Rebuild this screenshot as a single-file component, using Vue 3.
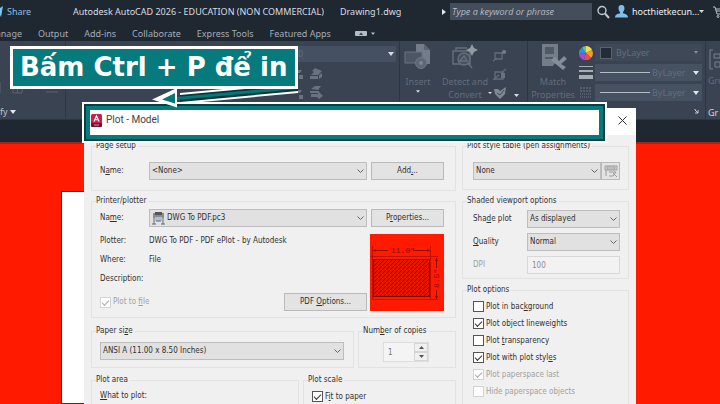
<script setup>
import { reactive } from 'vue'

const tabs = ['Output', 'Add-ins', 'Collaborate', 'Express Tools', 'Featured Apps']

const options = reactive([
  { id: 'bg', pre: 'Plot in bac', key: 'k', post: 'ground', on: false, disabled: false },
  { id: 'lw', pre: 'Plot object lineweights', key: '', post: '', on: true, disabled: false },
  { id: 'tr', pre: 'Plot ', key: 't', post: 'ransparency', on: false, disabled: false },
  { id: 'st', pre: 'Plot with plot styl', key: 'e', post: 's', on: true, disabled: false },
  { id: 'ps', pre: 'Plot paperspace last', key: '', post: '', on: true, disabled: true },
  { id: 'hd', pre: 'Hide paperspace objects', key: '', post: '', on: false, disabled: true }
])
</script>

<template>
  <div class="app">
    <header class="titlebar">
      <svg class="plane" viewBox="0 0 4 12"><path d="M0 2L3 0L1 11L0 9Z" fill="#7cc4f2" /></svg>
      <a class="share" href="#">Share</a>
      <span class="product">Autodesk AutoCAD 2026 - EDUCATION (NON COMMERCIAL)</span>
      <span class="file">Drawing1.dwg</span>
      <svg class="play" viewBox="0 0 4 6"><path d="M0 0L4 3L0 6Z" fill="#e4e8ec" /></svg>
      <input class="search" type="text" placeholder="Type a keyword or phrase" aria-label="Search">
      <svg class="glass" viewBox="0 0 14 14" fill="none" stroke="#c3c8cd">
        <circle cx="6" cy="5.5" r="4" stroke-width="1.4" /><path d="M9 8.5L13 13" stroke-width="2" />
      </svg>
      <svg class="user" viewBox="0 0 13 13" fill="#7fbdec">
        <path d="M6.500 0C9 0 9.700 1.800 9.400 4C9.200 5.500 8.500 6.500 8 7V8.300C10 9 13 9.300 13 12.500H0C0 9.300 3 9 5 8.300V7C4.500 6.500 3.800 5.500 3.600 4C3.300 1.800 4 0 6.500 0Z" />
      </svg>
      <a class="account" href="#">hocthietkecun...</a>
      <svg class="caret" viewBox="0 0 5 3"><path d="M0 0H5L2.500 3Z" fill="#d5d9dd" /></svg>
      <svg class="cart" viewBox="0 0 7 12" fill="none" stroke="#b9c0c7">
        <path d="M0 1H2L4 8H8M2.500 3H8M3 5H8" /><circle cx="5" cy="10.500" r="1" />
      </svg>
    </header>

    <nav class="tabs">
      <a class="first" href="#">Manage</a>
      <a v-for="t in tabs" :key="t" href="#">{{ t }}</a>
      <svg class="tabtool" viewBox="0 0 20 7">
        <rect y="1" width="12" height="5" rx="1" fill="#b6bcc3" /><path d="M4 5L6 2.500L8 5Z" fill="#333b48" />
        <path d="M16 2.500H20L18 5Z" fill="#b6bcc3" />
      </svg>
    </nav>

    <div class="ribbon">
      <section class="panel modify">
        <svg class="modicons" viewBox="0 0 65 16" fill="none" stroke="#596474">
          <path d="M0 2V13M13 3H22V13H13ZM13 8H22M17.500 3V13M46 4H57M44 8H54M46 12H58" />
          <path d="M30.500 6H34.500L32.500 9Z" fill="#d2d7dc" stroke="none" />
        </svg>
        <a class="panelname" href="#">fy
          <svg class="caret" viewBox="0 0 6 4"><path d="M0 0H6L3 4Z" fill="#e5e8eb" /></svg>
        </a>
      </section>

      <section class="panel layers">
        <div class="layerbox"><span>0</span><svg class="caret" viewBox="0 0 6 4"><path d="M0 0H6L3 4Z" fill="#d9dde1" /></svg></div>
        <svg class="layericons" viewBox="0 0 101 36">
          <g fill="#69727f">
            <path d="M2 3H7L5 6H2ZM4 8H8V12H4ZM2 8H3V12H2ZM2 23H7L5 26H2ZM4 28H8V32H4Z" />
            <path d="M16 8L19 5L26 5L23 8ZM17 4L20 1L27 4L24 7ZM15 9H23V12H15ZM24 8L27 6V10L24 12Z" />
            <path d="M16 22L20 19H26L23 23ZM15 24H24V26H15ZM16 27H22V30H16ZM24 25L28 29L24 32L21 29Z" />
          </g>
        </svg>
      </section>

      <section class="panel insert">
        <button class="tool" type="button">
          <svg class="toolicon" viewBox="0 0 28 26">
            <path d="M12 0H20L26 6V20H12Z" fill="#737c88" /><path d="M20 0V6H26Z" fill="#596473" />
            <rect x="1" y="8" width="17" height="11" fill="#4b5666" stroke="#6a7480" />
            <circle cx="17" cy="19" r="5.500" fill="#5d6775" stroke="#6f7884" /><circle cx="17" cy="19" r="2" fill="#7b8490" />
          </svg>
          <span>Insert</span>
          <svg class="caret" viewBox="0 0 6 4"><path d="M0 0H6L3 4Z" fill="#d9dde1" /></svg>
        </button>
        <button class="tool detect" type="button">
          <svg class="toolicon" viewBox="0 0 28 26" fill="none" stroke="#65707c" stroke-width="1.400">
            <path d="M5 6V4H16M2 7H19V20H2Z" /><circle cx="13" cy="15" r="6" fill="#465060" /><path d="M17 19L21 24M9 17L13 12L16 17Z" />
            <path d="M21 0L23 4L27 6L23 8L21 12L19 8L15 6L19 4Z" fill="#929aa4" stroke="none" />
          </svg>
          <span>Detect and<br>Convert</span>
        </button>
        <svg class="smallicons" viewBox="0 0 32 54">
          <g fill="none" stroke="#636d79" stroke-width="1.300">
            <path d="M7 5H14V11H7ZM5 13L9 10M14 5L18 3M7 24H15V31H7ZM5 32L11 27M13 25L18 21" />
          </g>
          <circle cx="16" cy="4" r="2" fill="#757e89" /><rect x="13" y="25" width="4" height="5" fill="#69737f" />
          <path d="M6 41H10L12 43L18 39L17 46L12 51L7 46Z" fill="#7e8792" /><path d="M9 45L12 47L16 42" fill="none" stroke="#424c5b" />
          <path d="M0 44H4L2 46ZM26 46H31L28.500 49Z" fill="#d9dde1" />
        </svg>
      </section>

      <section class="panel props">
        <button class="tool match" type="button">
          <svg class="toolicon" viewBox="0 0 28 26">
            <path d="M3 0H19V15L14 22H3Z" fill="#737c88" /><path d="M6 3H15V10H6ZM6 13H14V15H6Z" fill="#4f5968" />
            <path d="M12 16L16 13L20 17L25 12L28 15L22 20L27 23L24 26L18 21Z" fill="#858d98" />
          </svg>
          <span>Match<br>Properties</span>
        </button>
        <div class="proplist">
          <svg class="propicon" viewBox="0 0 14 14">
            <path d="M7 7V0A7 7 0 0 1 13 4Z" fill="#f4dc4a" /><path d="M7 7L13 4A7 7 0 0 1 12 12Z" fill="#f39a35" />
            <path d="M7 7L12 12A7 7 0 0 1 5 14Z" fill="#e94b57" /><path d="M7 7L5 14A7 7 0 0 1 0 8Z" fill="#a64cc8" />
            <path d="M7 7L0 8A7 7 0 0 1 3 1.500Z" fill="#2f8fe8" /><path d="M7 7L3 1.500A7 7 0 0 1 7 0Z" fill="#5bc98a" />
          </svg>
          <div class="combo flat"><i class="swatch"></i><span>ByLayer</span><svg class="caret" viewBox="0 0 6 4"><path d="M1 0H5L3 3Z" fill="#848d98" /></svg></div>
          <svg class="propicon" viewBox="0 0 14 14" fill="#a7adb5"><path d="M0 0H14V1H0ZM0 4H14V6H0ZM0 9H14V13H0Z" /></svg>
          <div class="combo"><i class="line"></i><span>ByLayer</span><svg class="caret" viewBox="0 0 6 4"><path d="M0 0H6L3 4Z" fill="#e1e4e8" /></svg></div>
          <svg class="propicon" viewBox="0 0 14 14" stroke="#717b87"><path d="M1 2H13M1 5H13" stroke-dasharray="2 1" /><path d="M1 8H13M1 11H13" stroke-dasharray="1 1" /></svg>
          <div class="combo"><i class="line"></i><span>ByLayer</span><svg class="caret" viewBox="0 0 6 4"><path d="M0 0H6L3 4Z" fill="#e1e4e8" /></svg></div>
        </div>
        <svg class="launcher" viewBox="0 0 5 5"><path d="M0 0H2M1 1L4 4M4 1V4H1" fill="none" stroke="#c7ccd2" /></svg>
      </section>

      <section class="panel groups">
        <svg class="groupicon" viewBox="0 0 12 22" fill="none" stroke="#78828e"><path d="M5 1H2V20H5M6 5H12V9H6ZM7 13H12V18H7Z" /></svg>
        <span class="dim">Gro</span>
        <span class="groupname">Gr</span>
      </section>
    </div>

    <main class="canvas"><div class="paper"></div></main>

    <form class="dialog" @submit.prevent>
      <div class="caption">
        <svg class="logo" viewBox="0 0 11 13">
          <rect width="11" height="13" rx="1.500" fill="#c91f4b" /><path d="M0 9H11V11.500A1.500 1.500 0 0 1 9.500 13H1.500A1.500 1.500 0 0 1 0 11.500Z" fill="#70142f" />
          <path d="M3 7.500L5.500 2L8 7.500M4 5.700H7" fill="none" stroke="#fff" stroke-width="1.300" /><path d="M3 11H8" stroke="#d896a8" />
        </svg>
        <h1>Plot - Model</h1>
        <button class="close" type="button" aria-label="Close">
          <svg viewBox="0 0 9 9"><path d="M0.500 0.500L8.500 8.500M8.500 0.500L0.500 8.500" stroke="#333" fill="none" /></svg>
        </button>
      </div>

      <div class="columns">
        <div class="left">
          <fieldset class="setup">
            <legend>Page setup</legend>
            <div class="grid3">
              <label for="page">N<u>a</u>me:</label>
              <span class="pick"><select id="page"><option>&lt;None&gt;</option></select><svg viewBox="0 0 7 4"><path d="M0.500 0.500L3.500 3.500L6.500 0.500" /></svg></span>
              <button type="button">Add<u>.</u>..</button>
            </div>
          </fieldset>

          <fieldset class="printer">
            <legend>Printer/plotter</legend>
            <div class="grid3">
              <label for="plotter">Na<u>m</u>e:</label>
              <span class="pick">
                <select id="plotter" class="withicon"><option>DWG To PDF.pc3</option></select>
                <svg class="device" viewBox="0 0 13 13"><path d="M1 1H12V6H1Z" fill="#8a8a8a" /><path d="M3 0H10V3H3Z" fill="#555" /><path d="M3 5H10V9H3Z" fill="#a9c4d6" /><path d="M2 6V12M11 6V12M0 12H4M9 12H13M4 9H9" stroke="#667" /></svg>
                <svg viewBox="0 0 7 4"><path d="M0.500 0.500L3.500 3.500L6.500 0.500" /></svg>
              </span>
              <button type="button">P<u>r</u>operties...</button>
            </div>
            <div class="details">
              <div class="facts">
                <dl>
                  <dt>Plotter:</dt><dd>DWG To PDF - PDF ePlot - by Autodesk</dd>
                  <dt>Where:</dt><dd>File</dd>
                  <dt>Description:</dt><dd></dd>
                </dl>
                <div class="filerow">
                  <label class="check off"><input type="checkbox" checked disabled><span>Plot to <u>f</u>ile</span></label>
                  <button type="button">PDF <u>O</u>ptions...</button>
                </div>
              </div>
              <svg class="preview" viewBox="0 0 74 77" role="img" aria-label="Paper preview">
                <defs><pattern id="hatch" width="4" height="4" patternUnits="userSpaceOnUse"><path d="M-1 5L5 -1" stroke="#9a0c00" /></pattern></defs>
                <rect width="74" height="77" fill="#ff1a00" />
                <rect x="3.500" y="25.500" width="56" height="37" fill="#e31400" /><rect x="3.500" y="25.500" width="56" height="37" fill="url(#hatch)" stroke="#7c0b00" />
                <path d="M0 22.500H68M60.500 12V66M2.500 12V66M2 65.500H68" stroke="#bb1300" fill="none" />
                <path d="M3 16.500H18M43 16.500H60M66.500 24V34M66.500 56V65" stroke="#8c0d00" />
                <path d="M3 16.500L6 15V18ZM60 16.500L57 15V18ZM66.500 24L65 27H68ZM66.500 65L65 62H68Z" fill="#8c0d00" />
                <text x="21" y="19">11.0"</text>
                <text transform="translate(69 54) rotate(-90)">8.5"</text>
              </svg>
            </div>
          </fieldset>

          <div class="pair sizes">
            <fieldset class="size">
              <legend>Paper si<u>z</u>e</legend>
              <span class="pick"><select aria-label="Paper size"><option>ANSI A (11.00 x 8.50 Inches)</option></select><svg viewBox="0 0 7 4"><path d="M0.500 0.500L3.500 3.500L6.500 0.500" /></svg></span>
            </fieldset>
            <fieldset class="copies">
              <legend>Num<u>b</u>er of copies</legend>
              <div class="spinner">
                <input type="text" value="1" disabled aria-label="Number of copies">
                <button type="button" aria-label="More"><svg viewBox="0 0 5 3"><path d="M0 3H5L2.500 0Z" /></svg></button>
                <button type="button" aria-label="Fewer"><svg viewBox="0 0 5 3"><path d="M0 0H5L2.500 3Z" /></svg></button>
              </div>
            </fieldset>
          </div>

          <div class="pair areas">
            <fieldset>
              <legend>Plot area</legend>
              <span class="what"><u>W</u>hat to plot:</span>
            </fieldset>
            <fieldset>
              <legend>Plot scale</legend>
              <label class="check fit"><input type="checkbox" checked><span>F<u>i</u>t to paper</span></label>
            </fieldset>
          </div>
        </div>

        <div class="right">
          <fieldset class="style">
            <legend>Plot style table (pen assi<u>g</u>nments)</legend>
            <div class="stylerow">
              <span class="pick"><select aria-label="Plot style table"><option>None</option></select><svg viewBox="0 0 7 4"><path d="M0.500 0.500L3.500 3.500L6.500 0.500" /></svg></span>
              <button type="button" disabled aria-label="Edit"><svg viewBox="0 0 14 14" fill="none" stroke="#9a9a9a"><path d="M1 2H13V6H1ZM3 3H11V5H3ZM2 6V12M5 8H12M5 12H9M9 9L13 13M12 8L9 12" /></svg></button>
            </div>
          </fieldset>
          <fieldset class="shaded">
            <legend>Shaded viewport options</legend>
            <div class="shadegrid">
              <label for="shade">Sha<u>d</u>e plot</label>
              <span class="pick"><select id="shade"><option>As displayed</option></select><svg viewBox="0 0 7 4"><path d="M0.500 0.500L3.500 3.500L6.500 0.500" /></svg></span>
              <label for="quality"><u>Q</u>uality</label>
              <span class="pick"><select id="quality"><option>Normal</option></select><svg viewBox="0 0 7 4"><path d="M0.500 0.500L3.500 3.500L6.500 0.500" /></svg></span>
              <label class="off" for="dpi">DPI</label>
              <input id="dpi" type="text" value="100" disabled>
            </div>
          </fieldset>
          <fieldset class="options">
            <legend>Plot options</legend>
            <label v-for="o in options" :key="o.id" class="check" :class="{ off: o.disabled }">
              <input v-model="o.on" type="checkbox" :disabled="o.disabled">
              <span>{{ o.pre }}<u v-if="o.key">{{ o.key }}</u>{{ o.post }}</span>
            </label>
          </fieldset>
        </div>
      </div>
    </form>

    <div class="highlight"></div>
    <svg class="arrow" viewBox="0 0 146 26">
      <path d="M28 7L146 -4V7L28 18Z" fill="#fff" />
      <path d="M28 9L146 -2V5L28 16Z" fill="#03373c" />
      <path d="M24 11L146 0V3L24 14Z" fill="#067678" />
      <path d="M0 13.500L25 2V21.500Z" fill="#fff" />
      <path d="M10 13.500L23 7V17.500Z" fill="#067678" />
    </svg>
    <div class="callout">Bấm Ctrl + P để in</div>
  </div>
</template>

<style>
body { margin: 0; background: #1f2731; }
</style>

<style scoped>
* { box-sizing: border-box; }
.app { position: relative; display: flex; flex-direction: column; height: 100vh; overflow: hidden; background: #1f2731; color: #d9dde2; font: 9px/14px "Noto Sans", "Open Sans", sans-serif; white-space: nowrap; }
a { color: inherit; text-decoration: none; }
svg { display: block; flex: none; }
button, input, select { font: inherit; color: inherit; margin: 0; }
.caret { width: 6px; height: 4px; }

.titlebar { display: flex; align-items: center; height: 23px; }
.plane { width: 4px; height: 12px; }
.share { margin-left: 3px; width: 66px; color: #8dbfe6; }
.product { width: 267px; }
.file { flex: 1; }
.play { width: 4px; height: 6px; margin-right: 4px; }
.search { width: 142px; height: 17px; border: 0; padding: 0 2px; background: #434d5c; font: italic 9px "Open Sans", sans-serif; }
.search::placeholder { color: #b5bcc5; opacity: 1; }
.glass { width: 14px; height: 14px; margin: 0 5px 0 4px; }
.user { width: 13px; height: 13px; }
.account { width: 67px; margin-left: 4px; color: #eceff1; }
.titlebar .caret { width: 5px; height: 3px; }
.cart { width: 7px; height: 12px; margin-left: 9px; }

.tabs { display: flex; align-items: center; gap: 16px; height: 18px; padding-top: 3px; color: #a5adb7; }
.first { display: flex; justify-content: flex-end; width: 22px; overflow: hidden; }
.tabtool { width: 20px; height: 7px; margin-left: 8px; }

.ribbon { display: grid; grid-template-columns: 66px 1fr 128px 178px 14px; height: 79px; background: #394352; border-bottom: 1px solid #2c3541; color: #636d7a; }
.panel { display: flex; overflow: hidden; border-right: 1px solid #2d3643; min-width: 0; }
.modify { flex-direction: column; justify-content: flex-end; }
.modicons { width: 65px; height: 16px; }
.panelname { display: flex; align-items: center; gap: 2px; height: 24px; padding-top: 8px; color: #b9c0c8; }
.layers { flex-direction: column; align-items: flex-end; padding: 5px 3px; }
.layerbox { display: flex; align-items: center; justify-content: space-between; width: 110px; height: 16px; padding: 0 2px 0 12px; background: #455062; }
.layericons { width: 101px; height: 36px; margin-top: 5px; }
.insert { padding: 3px 0 0 4px; }
.tool { display: flex; flex-direction: column; align-items: center; width: 28px; padding: 0; border: 0; background: none; line-height: 13px; }
.toolicon { width: 28px; height: 26px; margin-bottom: 5px; }
.tool .caret { width: 4px; height: 3px; margin-top: 2px; }
.detect { width: 58px; margin-left: 4px; }
.smallicons { width: 32px; height: 54px; margin-top: 4px; margin-left: -6px; }
.props { display: grid; grid-template-columns: 46px 1fr; grid-template-rows: 58px 1fr; column-gap: 3px; padding: 3px 3px 0 2px; }
.match { width: 46px; }
.proplist { display: grid; grid-template-columns: 14px 1fr; grid-auto-rows: 17px; gap: 3px 2px; align-items: center; }
.propicon { width: 14px; height: 14px; }
.combo { display: flex; align-items: center; gap: 2px; height: 17px; padding: 0 3px 0 5px; background: #465162; }
.combo span { flex: 1; }
.flat { background: #3e4857; }
.swatch { width: 12px; height: 12px; margin-right: 2px; background: #242c37; border: 1px solid #586271; }
.line { width: 50px; height: 1px; background: #b6bdc5; }
.launcher { width: 5px; height: 5px; grid-column: 2; justify-self: end; align-self: center; margin-right: 3px; }
.groups { flex-direction: column; padding: 8px 0 0 2px; border: 0; overflow: visible; }
.groupicon { width: 12px; height: 22px; }
.dim { margin-top: 3px; }
.groupname { margin-top: 18px; color: #d5d9de; }

.canvas { flex: 1; margin-top: 22px; border-top: 2px solid #9c2821; padding-top: 47px; background: #ff1a00; }
.paper { height: 100%; width: 75%; margin-left: 61px; background: #fff; border: 1px solid #6e2019; }

.dialog { position: absolute; top: 108px; left: 84px; width: 552px; background: #f0f0f0; color: #303030; font: 8px/12px "DejaVu Sans Condensed", Roboto, sans-serif; }
.caption { display: flex; align-items: center; height: 27px; padding: 0 9px 3px 7px; background: #fff; }
.logo { width: 11px; height: 13px; margin-right: 4px; }
h1 { flex: 1; margin: 0; font: 400 10px/14px Roboto, sans-serif; color: #444; }
.close { display: flex; padding: 0; border: 0; background: none; }
.close svg { width: 9px; height: 9px; }
.columns { display: grid; grid-template-columns: 365fr 167fr; gap: 6px; padding: 5px 7px 0; }
fieldset { margin: 0; padding: 0 0 0 8px; border: 1px solid #e2e2e2; min-width: 0; }
legend { margin-left: -4px; padding: 0 2px 0 0; height: 12px; }
u { text-underline-offset: 1px; }
.pick { display: grid; align-items: center; }
.pick > * { grid-area: 1 / 1; }
.pick > svg { width: 7px; height: 4px; justify-self: end; margin-right: 3px; fill: none; stroke: #666; pointer-events: none; }
.pick > .device { width: 13px; height: 13px; justify-self: start; margin-left: 3px; stroke: none; }
select { appearance: none; width: 100%; height: 18px; padding: 0 3px 0 2px; border: 1px solid #bdbdbd; border-radius: 0; background: #e1e1e1; }
.withicon { padding-left: 17px; }
.dialog button:not(.close) { height: 18px; padding: 0; border: 1px solid #bababa; background: #e3e3e3; line-height: 12px; }
.grid3 { display: grid; grid-template-columns: 49px 1fr 73px; column-gap: 4px; align-items: center; padding-right: 11px; }
.grid3 .pick { margin-left: -4px; }
.setup { height: 51px; padding-top: 10px; }
.printer { height: 123px; margin-top: 4px; padding-top: 2px; }
.details { display: flex; justify-content: space-between; padding-right: 11px; }
.facts { flex: 1; margin-right: 3px; padding-top: 4px; }
dl { display: grid; grid-template-columns: 49px 1fr; grid-auto-rows: 19px; align-items: center; margin: 0; }
dd { margin: 0; }
.filerow { display: flex; justify-content: space-between; align-items: center; margin-top: 5px; }
.filerow button { width: 83px; }
.preview { width: 74px; height: 77px; margin-top: 7px; }
.preview text { font: 8px "Liberation Mono", monospace; fill: #8c0d00; }
.pair { display: grid; gap: 4px; }
.sizes { grid-template-columns: 263fr 98fr; margin-top: 7px; }
.sizes fieldset { height: 43px; padding-top: 5px; }
.size { padding-right: 9px; }
.areas { grid-template-columns: 208fr 153fr; margin-top: 6px; }
.areas fieldset { height: 60px; }
.what { display: block; margin-top: 4px; }
.spinner { display: grid; grid-template-columns: 30px 14px; grid-template-rows: 9px 9px; margin-left: 16px; border: 1px solid #ddd; width: 46px; }
.spinner input { grid-row: 1 / 3; width: 30px; height: 18px; padding: 0 4px; border: 0; background: #f4f4f4; color: #777; }
.dialog .spinner button { display: grid; place-items: center; height: 9px; border-color: #d5d5d5; background: #f0f0f0; }
.spinner svg { width: 5px; height: 3px; fill: #555; }
.check { display: flex; align-items: center; gap: 2px; height: 17px; }
.check input { appearance: none; width: 11px; height: 11px; border: 1px solid #555; background: #fff; }
.check input:checked::before { content: ""; display: block; width: 6px; height: 3px; margin: 2px 0 0 1px; border: solid #333; border-width: 0 0 1px 1px; transform: rotate(-45deg); }
.off { color: #a0a0a0; }
.off input { border-color: #d3d3d3; }
.off input:checked::before { border-color: #aaa; }
.fit { margin-top: 2px; }
.right fieldset { padding-left: 10px; padding-right: 8px; }
.right legend { margin-left: -6px; }
.style { height: 50px; padding-top: 10px; }
.stylerow { display: grid; grid-template-columns: 1fr 19px; }
.stylerow button { display: grid; place-items: center; background: #d0d0d0; }
.stylerow button svg { width: 14px; height: 14px; }
.shaded { height: 84px; margin-top: 5px; padding-top: 3px; }
.shadegrid { display: grid; grid-template-columns: 54px 1fr; grid-auto-rows: 18px; row-gap: 5px; align-items: center; }
#dpi { width: 100%; height: 18px; padding: 0 4px; border: 1px solid #d8d8d8; background: #f2f2f2; color: #8d8d8d; }
.options { height: 130px; margin-top: 5px; padding-top: 2px; }

.highlight { position: absolute; left: 82px; top: 102px; width: 525px; height: 41px; border: 2px solid #fff; box-shadow: inset 0 0 0 2px #033f43, inset 0 0 0 6px #067a7c; }
.arrow { position: absolute; left: 152px; top: 86px; width: 146px; height: 26px; }
.callout { position: absolute; left: 10px; top: 46px; height: 43px; padding: 0 8px 0 7px; border: 3px solid #fff; background: #067a7c; color: #fff; font: bold 26px/37px "DejaVu Sans", sans-serif; }
</style>
